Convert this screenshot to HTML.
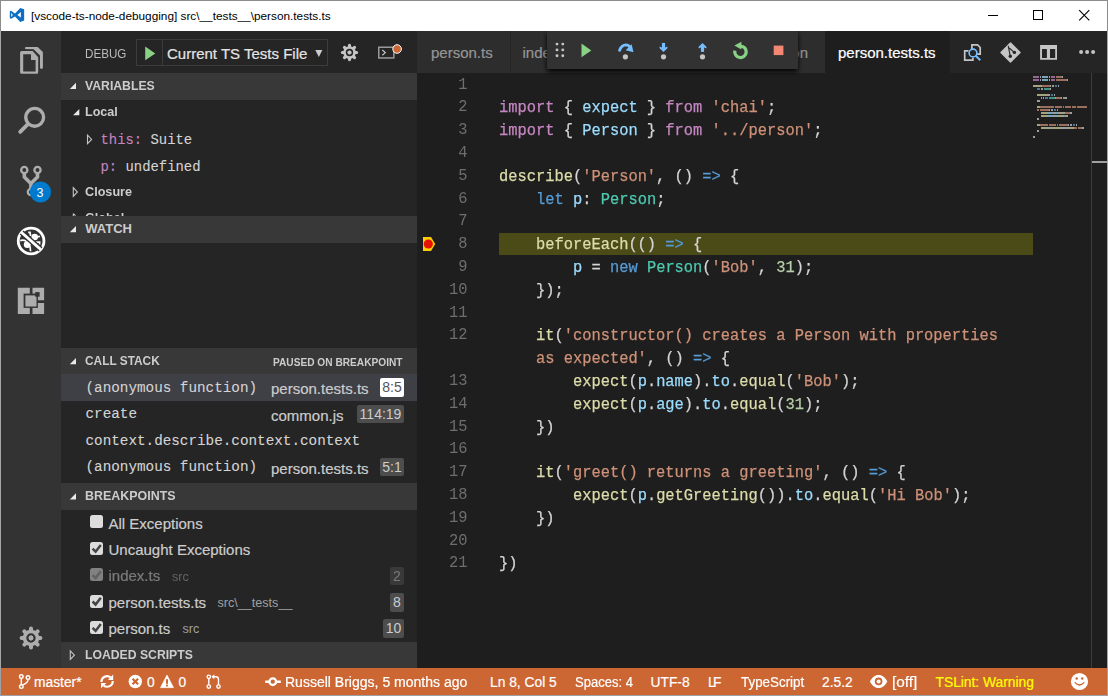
<!DOCTYPE html>
<html><head><meta charset="utf-8">
<style>
*{box-sizing:border-box}
html,body{margin:0;padding:0}
body{width:1108px;height:696px;overflow:hidden;position:relative;background:#9ba1a6;font-family:"Liberation Sans",sans-serif}
.a{position:absolute}
.t{position:absolute;white-space:pre;line-height:1;transform-origin:0 50%}
#titlebar{left:1px;top:1px;width:1106px;height:30px;background:#fff}
#topb{left:0;top:0;width:1108px;height:1px;background:#8c8c8c}
#leftb{left:0;top:0;width:1px;height:696px;background:#a6a6a6}
#activity{left:1px;top:31px;width:60px;height:637px;background:#333333}
#sidebar{left:61px;top:31px;width:356px;height:637px;background:#252526;overflow:hidden}
#tabs{left:417px;top:31px;width:690px;height:42px;background:#252526}
#editor{left:417px;top:73px;width:690px;height:595px;background:#1e1e1e;overflow:hidden}
#status{left:1px;top:668px;width:1106px;height:27px;background:#cc6633}
.hdr{position:absolute;left:0;width:356px;height:26.5px;background:#383838}
.hdrt{position:absolute;left:24.3px;top:0.3px;line-height:26.4px;font-size:13px;font-weight:bold;color:#cccccc;white-space:pre;transform-origin:0 50%}
.cl{position:absolute;left:82px;height:22.8px;line-height:22.8px;font-family:"Liberation Mono",monospace;font-size:16px;white-space:pre;padding-top:1.5px;transform:scaleX(0.9625);transform-origin:0 0;-webkit-text-stroke-width:0.25px}
.ln{position:absolute;left:0;width:50.5px;text-align:right;height:22.8px;line-height:22.8px;font-family:"Liberation Mono",monospace;font-size:16px;color:#6e6e6e;white-space:pre;padding-top:0.6px;transform:scaleX(0.9625);transform-origin:100% 0}
.row{position:absolute;left:0;width:356px;height:26.4px}
.rt{position:absolute;top:2px;line-height:26.4px;white-space:pre;transform-origin:0 50%}
.mono{font-family:"Liberation Mono",monospace;font-size:13.9px;color:#d4d4d4;-webkit-text-stroke-width:0.1px}
.ui{font-size:15px;color:#cccccc;-webkit-text-stroke-width:0.2px}
.bold{font-size:13px;font-weight:bold;color:#cccccc;top:0.4px}
.desc{font-size:12.6px;color:#a0a0a0;top:1.3px}
.badge{position:absolute;height:18.5px;line-height:19.5px;font-size:14px;text-align:center;background:#4d4d4d;color:#cccccc;border-radius:2px;white-space:pre}
.badge.sel{background:#ffffff;color:#555555}
.cb{position:absolute;width:13px;height:13px;background:#dcdcdc;border-radius:2.5px;top:6px;left:29px}
.sb{position:absolute;top:1px;line-height:27px;font-size:13.8px;color:#fff;white-space:pre;transform-origin:0 50%;-webkit-text-stroke-width:0.2px}
.tab{position:absolute;top:0;height:42px;background:#2d2d2d}
.tabt{position:absolute;top:1.2px;line-height:42px;font-size:15px;color:#969696;white-space:pre;-webkit-text-stroke-width:0.2px}
</style></head><body>
<div class="a" id="topb"></div>
<div class="a" id="leftb"></div>
<div class="a" id="titlebar">
  <div class="t" style="left:30px;top:10.3px;font-size:11.8px;color:#000;transform:scaleX(1.0)">[vscode-ts-node-debugging] src\__tests__\person.tests.ts</div>
</div>
<div class="a" id="activity"></div>
<div class="a" id="sidebar">
  <!-- debug header -->
  <div class="t" style="left:24px;top:16.5px;font-size:12.2px;color:#bbbbbb;transform:scaleX(0.955)">DEBUG</div>
  <div class="a" style="left:75px;top:8px;width:192px;height:26.5px;border:1px solid #3c3c3c"></div>
  <div class="a" style="left:101px;top:9px;width:1px;height:24.5px;background:#3c3c3c"></div>
  <div class="t ui" style="left:106px;top:15px;color:#e4e4e4">Current TS Tests File</div>

  <!-- VARIABLES -->
  <div class="hdr" style="top:42px"><div class="hdrt" style="transform:scaleX(0.94)">VARIABLES</div></div>
  <div class="row" style="top:68.5px"><div class="rt bold" style="left:24.3px;top:-0.2px;font-size:13.6px;transform:scaleX(0.925)">Local</div></div>
  <div class="row" style="top:94.9px"><div class="rt mono" style="left:39.5px;top:1.3px"><span style="color:#c586c0">this:</span> Suite</div></div>
  <div class="row" style="top:121.3px"><div class="rt mono" style="left:39.5px;top:1.3px"><span style="color:#c586c0">p:</span> undefined</div></div>
  <div class="row" style="top:147.7px"><div class="rt bold" style="left:24.3px;font-size:13.6px;transform:scaleX(0.93)">Closure</div></div>
  <div class="row" style="top:174.1px;height:10.9px;overflow:hidden"><div class="rt bold" style="left:24.3px;font-size:13.6px;transform:scaleX(0.93)">Global</div></div>

  <!-- WATCH -->
  <div class="hdr" style="top:185px"><div class="hdrt">WATCH</div></div>

  <!-- CALL STACK -->
  <div class="hdr" style="top:317px"><div class="hdrt" style="transform:scaleX(0.913)">CALL STACK</div>
    <div class="t" style="left:211.6px;top:9px;font-size:10.6px;font-weight:bold;color:#cccccc;transform:scaleX(0.958)">PAUSED ON BREAKPOINT</div></div>
  <div class="row" style="top:343.3px;background:#3f3f46">
    <div class="rt mono" style="left:24.5px;top:0.8px;font-size:14.3px">(anonymous function)</div>
    <div class="rt ui" style="left:210px">person.tests.ts</div>
    <div class="badge sel" style="left:319px;top:4.1px;width:24px">8:5</div>
  </div>
  <div class="row" style="top:369.7px">
    <div class="rt mono" style="left:24.5px;top:0.8px;font-size:14.3px">create</div>
    <div class="rt ui" style="left:210px">common.js</div>
    <div class="badge" style="left:296px;top:4.1px;width:47px">114:19</div>
  </div>
  <div class="row" style="top:396.1px">
    <div class="rt mono" style="left:24.5px;top:0.8px;font-size:14.3px">context.describe.context.context</div>
  </div>
  <div class="row" style="top:422.5px">
    <div class="rt mono" style="left:24.5px;top:0.8px;font-size:14.3px">(anonymous function)</div>
    <div class="rt ui" style="left:210px">person.tests.ts</div>
    <div class="badge" style="left:319px;top:4.1px;width:24px">5:1</div>
  </div>

  <!-- BREAKPOINTS -->
  <div class="hdr" style="top:452px"><div class="hdrt" style="transform:scaleX(0.957)">BREAKPOINTS</div></div>
  <div class="row" style="top:478.5px">
    <div class="cb" style="top:5.7px"></div>
    <div class="rt ui" style="left:47.5px;top:1px">All Exceptions</div>
  </div>
  <div class="row" style="top:504.9px">
    <div class="cb"></div>
    <div class="rt ui" style="left:47.5px;top:1px">Uncaught Exceptions</div>
  </div>
  <div class="row" style="top:531.3px;opacity:0.5">
    <div class="cb"></div>
    <div class="rt ui" style="left:47.5px;top:1px">index.ts</div>
    <div class="rt desc" style="left:111px">src</div>
    <div class="badge" style="left:329px;top:4.4px;width:14px">2</div>
  </div>
  <div class="row" style="top:557.7px">
    <div class="cb"></div>
    <div class="rt ui" style="left:47.5px;top:1px">person.tests.ts</div>
    <div class="rt desc" style="left:156.5px">src\__tests__</div>
    <div class="badge" style="left:329px;top:4.4px;width:14px">8</div>
  </div>
  <div class="row" style="top:584.1px">
    <div class="cb"></div>
    <div class="rt ui" style="left:47.5px;top:1px">person.ts</div>
    <div class="rt desc" style="left:121.5px">src</div>
    <div class="badge" style="left:322px;top:4.4px;width:21px">10</div>
  </div>
  <div class="hdr" style="top:610.5px"><div class="hdrt" style="transform:scaleX(0.939)">LOADED SCRIPTS</div></div>
</div>
<div class="a" id="tabs">
  <div class="tab" style="left:0;width:93px"><div class="tabt" style="left:14px">person.ts</div></div>
  <div class="tab" style="left:94px;width:104px"><div class="tabt" style="left:11.5px">index.ts</div></div>
  <div class="tab" style="left:199px;width:209px"><div class="tabt" style="right:17px">launch.json</div></div>
  <div class="tab" style="left:408px;width:125px;background:#1e1e1e"><div class="tabt" style="left:13px;color:#ffffff">person.tests.ts</div></div>
</div>
<div class="a" id="editor">
<div class="a" style="left:82px;top:159.6px;width:533.7px;height:22.8px;background:#4b4b18"></div>
<div class="ln" style="top:0.00px">1</div>
<div class="ln" style="top:22.80px">2</div>
<div class="ln" style="top:45.60px">3</div>
<div class="ln" style="top:68.40px">4</div>
<div class="ln" style="top:91.20px">5</div>
<div class="ln" style="top:114.00px">6</div>
<div class="ln" style="top:136.80px">7</div>
<div class="ln" style="top:159.60px">8</div>
<div class="ln" style="top:182.40px">9</div>
<div class="ln" style="top:205.20px">10</div>
<div class="ln" style="top:228.00px">11</div>
<div class="ln" style="top:250.80px">12</div>
<div class="ln" style="top:296.40px">13</div>
<div class="ln" style="top:319.20px">14</div>
<div class="ln" style="top:342.00px">15</div>
<div class="ln" style="top:364.80px">16</div>
<div class="ln" style="top:387.60px">17</div>
<div class="ln" style="top:410.40px">18</div>
<div class="ln" style="top:433.20px">19</div>
<div class="ln" style="top:456.00px">20</div>
<div class="ln" style="top:478.80px">21</div>
<div class="cl" style="top:0.00px"></div>
<div class="cl" style="top:22.80px"><span style="color:#c586c0">import</span><span style="color:#d4d4d4"> { </span><span style="color:#9cdcfe">expect</span><span style="color:#d4d4d4"> } </span><span style="color:#c586c0">from</span><span style="color:#d4d4d4"> </span><span style="color:#ce9178">'chai'</span><span style="color:#d4d4d4">;</span></div>
<div class="cl" style="top:45.60px"><span style="color:#c586c0">import</span><span style="color:#d4d4d4"> { </span><span style="color:#9cdcfe">Person</span><span style="color:#d4d4d4"> } </span><span style="color:#c586c0">from</span><span style="color:#d4d4d4"> </span><span style="color:#ce9178">'../person'</span><span style="color:#d4d4d4">;</span></div>
<div class="cl" style="top:68.40px"></div>
<div class="cl" style="top:91.20px"><span style="color:#dcdcaa">describe</span><span style="color:#d4d4d4">(</span><span style="color:#ce9178">'Person'</span><span style="color:#d4d4d4">, () </span><span style="color:#569cd6">=&gt;</span><span style="color:#d4d4d4"> {</span></div>
<div class="cl" style="top:114.00px"><span style="color:#d4d4d4">    </span><span style="color:#569cd6">let</span><span style="color:#d4d4d4"> </span><span style="color:#9cdcfe">p</span><span style="color:#d4d4d4">: </span><span style="color:#4ec9b0">Person</span><span style="color:#d4d4d4">;</span></div>
<div class="cl" style="top:136.80px"></div>
<div class="cl" style="top:159.60px"><span style="color:#d4d4d4">    </span><span style="color:#dcdcaa">beforeEach</span><span style="color:#d4d4d4">(() </span><span style="color:#569cd6">=&gt;</span><span style="color:#d4d4d4"> {</span></div>
<div class="cl" style="top:182.40px"><span style="color:#d4d4d4">        </span><span style="color:#9cdcfe">p</span><span style="color:#d4d4d4"> = </span><span style="color:#569cd6">new</span><span style="color:#d4d4d4"> </span><span style="color:#4ec9b0">Person</span><span style="color:#d4d4d4">(</span><span style="color:#ce9178">'Bob'</span><span style="color:#d4d4d4">, </span><span style="color:#b5cea8">31</span><span style="color:#d4d4d4">);</span></div>
<div class="cl" style="top:205.20px"><span style="color:#d4d4d4">    });</span></div>
<div class="cl" style="top:228.00px"></div>
<div class="cl" style="top:250.80px"><span style="color:#d4d4d4">    </span><span style="color:#dcdcaa">it</span><span style="color:#d4d4d4">(</span><span style="color:#ce9178">'constructor() creates a Person with properties</span></div>
<div class="cl" style="top:273.60px"><span style="color:#d4d4d4">    </span><span style="color:#ce9178">as expected'</span><span style="color:#d4d4d4">, () </span><span style="color:#569cd6">=&gt;</span><span style="color:#d4d4d4"> {</span></div>
<div class="cl" style="top:296.40px"><span style="color:#d4d4d4">        </span><span style="color:#dcdcaa">expect</span><span style="color:#d4d4d4">(</span><span style="color:#9cdcfe">p</span><span style="color:#d4d4d4">.</span><span style="color:#9cdcfe">name</span><span style="color:#d4d4d4">).</span><span style="color:#9cdcfe">to</span><span style="color:#d4d4d4">.</span><span style="color:#dcdcaa">equal</span><span style="color:#d4d4d4">(</span><span style="color:#ce9178">'Bob'</span><span style="color:#d4d4d4">);</span></div>
<div class="cl" style="top:319.20px"><span style="color:#d4d4d4">        </span><span style="color:#dcdcaa">expect</span><span style="color:#d4d4d4">(</span><span style="color:#9cdcfe">p</span><span style="color:#d4d4d4">.</span><span style="color:#9cdcfe">age</span><span style="color:#d4d4d4">).</span><span style="color:#9cdcfe">to</span><span style="color:#d4d4d4">.</span><span style="color:#dcdcaa">equal</span><span style="color:#d4d4d4">(</span><span style="color:#b5cea8">31</span><span style="color:#d4d4d4">);</span></div>
<div class="cl" style="top:342.00px"><span style="color:#d4d4d4">    })</span></div>
<div class="cl" style="top:364.80px"></div>
<div class="cl" style="top:387.60px"><span style="color:#d4d4d4">    </span><span style="color:#dcdcaa">it</span><span style="color:#d4d4d4">(</span><span style="color:#ce9178">'greet() returns a greeting'</span><span style="color:#d4d4d4">, () </span><span style="color:#569cd6">=&gt;</span><span style="color:#d4d4d4"> {</span></div>
<div class="cl" style="top:410.40px"><span style="color:#d4d4d4">        </span><span style="color:#dcdcaa">expect</span><span style="color:#d4d4d4">(</span><span style="color:#9cdcfe">p</span><span style="color:#d4d4d4">.</span><span style="color:#dcdcaa">getGreeting</span><span style="color:#d4d4d4">()).</span><span style="color:#9cdcfe">to</span><span style="color:#d4d4d4">.</span><span style="color:#dcdcaa">equal</span><span style="color:#d4d4d4">(</span><span style="color:#ce9178">'Hi Bob'</span><span style="color:#d4d4d4">);</span></div>
<div class="cl" style="top:433.20px"><span style="color:#d4d4d4">    })</span></div>
<div class="cl" style="top:456.00px"></div>
<div class="cl" style="top:478.80px"><span style="color:#d4d4d4">})</span></div>
</div>
<div class="a" id="status">
  <div class="sb" style="left:33px">master*</div>
  <div class="sb" style="left:146px">0</div>
  <div class="sb" style="left:177.5px">0</div>
  <div class="sb" style="left:283.5px;transform:scaleX(1.016)">Russell Briggs, 5 months ago</div>
  <div class="sb" style="left:489px">Ln 8, Col 5</div>
  <div class="sb" style="left:573.5px;transform:scaleX(0.944)">Spaces: 4</div>
  <div class="sb" style="left:649.5px">UTF-8</div>
  <div class="sb" style="left:707px;letter-spacing:-2.6px">LF</div>
  <div class="sb" style="left:739.5px;transform:scaleX(0.97)">TypeScript</div>
  <div class="sb" style="left:821px">2.5.2</div>
  <div class="sb" style="left:890.5px;transform:scaleX(1.11)">[off]</div>
  <div class="sb" style="left:934.5px;color:#ffff00">TSLint: Warning</div>
</div>
<div class="a" style="left:1107px;top:0;width:1px;height:31px;background:#8c8c8c"></div>
<div class="a" style="left:1107px;top:31px;width:1px;height:637px;background:#a6a6a6"></div>
<div class="a" style="left:1107px;top:668px;width:1px;height:28px;background:#9ba1a6"></div>
<div class="a" style="left:0;top:0;width:1px;height:31px;background:#8c8c8c"></div>
<div class="a" style="left:0;top:668px;width:1px;height:28px;background:#9ba1a6"></div>
<svg class="a" style="left:0;top:0" width="1108" height="696" viewBox="0 0 1108 696">
<path fill="#0e6fc2" fill-rule="evenodd" d="M9.79,11.27 L11.06,10.64 L15.01,13.48 L20.22,7.95 L24.17,9.21 L24.17,20.43 L20.22,22.01 L15.01,16.48 L11.06,18.85 L9.79,18.22 Z M11.21,12.69 L12.8,14.9 L11.21,16.96 Z M20.85,12.06 L17.38,14.9 L20.85,17.59 Z"/>
<rect x="988" y="15" width="10" height="1" fill="#000"/>
<rect x="1033.5" y="10.5" width="9" height="9" fill="none" stroke="#000" stroke-width="1"/>
<path d="M1079.2,10.2 L1089.3,20.3 M1089.3,10.2 L1079.2,20.3" stroke="#000" stroke-width="1.1"/>
<path fill="#adadad" d="M26,46.9 H37.7 L42.9,52.1 V67.6 Q42.9,68.9 41.5,68.9 Q40,68.9 40,67.6 V55.4 L33.6,49.2 H26 Q25,49.2 25,48 Q25,46.9 26,46.9 Z"/>
<path d="M19,49.6 H32.6 L39.6,56.6 V75.1 H19 Z" fill="#333"/>
<path fill="#adadad" fill-rule="evenodd" d="M21.6,51 H32.6 L38.2,57.2 V72.3 Q38.2,73.8 36.7,73.8 H21.6 Q20.1,73.8 20.1,72.3 V52.5 Q20.1,51 21.6,51 Z M23.2,54.2 V71.5 H35.6 V60.1 H31 V54.2 Z"/>
<circle cx="34.7" cy="117.3" r="8.9" fill="none" stroke="#adadad" stroke-width="3.4"/>
<path d="M27.4,124.6 L20.2,131.8" stroke="#adadad" stroke-width="3.8" stroke-linecap="round"/>
<circle cx="24.3" cy="170" r="3.1" fill="none" stroke="#adadad" stroke-width="2.3"/>
<circle cx="37.5" cy="170" r="3.1" fill="none" stroke="#adadad" stroke-width="2.3"/>
<circle cx="30.9" cy="192" r="3.1" fill="none" stroke="#adadad" stroke-width="2.3"/>
<path d="M24.3,173.5 V177 L30.9,183.5 V188.5 M37.5,173.5 V177 L30.9,183.5" fill="none" stroke="#adadad" stroke-width="3.6" stroke-linejoin="round"/>
<circle cx="40.5" cy="192" r="10.6" fill="#007acc"/>
<circle cx="31.1" cy="241" r="12.85" fill="none" stroke="#fff" stroke-width="2.8"/>
<g fill="#fff"><circle cx="27.3" cy="244.5" r="3.5"/><circle cx="34.7" cy="237.1" r="3.3"/></g>
<g fill="none" stroke="#fff" stroke-width="1.7"><path d="M20.2,240.6 Q23.5,239.6 26.4,241.2"/><path d="M30.1,246.4 L30.5,251.3"/><path d="M28.2,232.3 H30 L30.6,236"/><path d="M36.8,237 L39.9,236.4"/><path d="M36.2,242.2 H39.6 V244.6"/></g>
<path d="M21.6,232.5 L40.6,249.3" stroke="#333" stroke-width="5.6"/>
<path d="M21.3,232.2 L40.9,249.6" stroke="#fff" stroke-width="2.8"/>
<path fill="#adadad" d="M17.8,287.8 H29.8 V314.1 H17.8 Z M32.5,287.8 H44.1 V300.3 H32.5 Z M32.5,303 H44.1 V314.1 H32.5 Z"/>
<rect x="23.6" y="293.6" width="14.3" height="14.3" fill="#333"/>
<rect x="25.4" y="295.4" width="11.1" height="11.1" fill="#adadad"/>
<rect x="35.2" y="292.1" width="4.4" height="4.6" fill="#333"/>
<path d="M31.00,630.70 L31.00,628.60 M36.16,632.84 L37.65,631.35 M38.30,638.00 L40.40,638.00 M36.16,643.16 L37.65,644.65 M31.00,645.30 L31.00,647.40 M25.84,643.16 L24.35,644.65 M23.70,638.00 L21.60,638.00 M25.84,632.84 L24.35,631.35 " stroke="#adadad" stroke-width="4.0" stroke-linecap="round"/><circle cx="31" cy="638" r="8.3" fill="#adadad"/><circle cx="31" cy="638" r="3.55" fill="none" stroke="#333" stroke-width="2.3"/><circle cx="31" cy="638" r="2.4" fill="#adadad"/>
<path d="M145.2,46.6 L155.3,53.45 L145.2,60.3 Z" fill="#89d185"/>
<path d="M315.3,50 L322.4,50 L318.85,56.9 Z" fill="#cccccc"/>
<path d="M349.50,47.20 L349.50,45.40 M353.25,48.75 L354.52,47.48 M354.80,52.50 L356.60,52.50 M353.25,56.25 L354.52,57.52 M349.50,57.80 L349.50,59.60 M345.75,56.25 L344.48,57.52 M344.20,52.50 L342.40,52.50 M345.75,48.75 L344.48,47.48 " stroke="#c5c5c5" stroke-width="3.2" stroke-linecap="round"/><circle cx="349.5" cy="52.5" r="6.3" fill="#c5c5c5"/><circle cx="349.5" cy="52.5" r="2.9" fill="none" stroke="#252526" stroke-width="1.6"/><circle cx="349.5" cy="52.5" r="1.8" fill="#c5c5c5"/>
<rect x="378.75" y="47.25" width="15.1" height="10.7" fill="none" stroke="#9a9a9a" stroke-width="1.5"/>
<path d="M382.3,50 L385.3,52.6 L382.3,55.2" fill="none" stroke="#c5c5c5" stroke-width="1.2"/>
<circle cx="397.1" cy="49" r="4.3" fill="#cc6633" stroke="#fff" stroke-width="1"/>
<path d="M76.0,82.8 L76.0,89.0 L69.8,89.0 Z" fill="#e8e8e8"/>
<path d="M79.3,109.0 L79.3,115.2 L73.1,115.2 Z" fill="#e8e8e8"/>
<path d="M87.5,135.1 L91.6,139.4 L87.5,143.70000000000002 Z" fill="none" stroke="#c5c5c5" stroke-width="1.1"/>
<path d="M73.3,187.7 L77.39999999999999,192 L73.3,196.3 Z" fill="none" stroke="#c5c5c5" stroke-width="1.1"/>
<path d="M76.0,226.0 L76.0,232.2 L69.8,232.2 Z" fill="#e8e8e8"/>
<path d="M73.3,213.6 L75.5,215.6 M73.3,213.6 V216" stroke="#c5c5c5" stroke-width="1.1" fill="none"/>
<path d="M76.0,358.0 L76.0,364.2 L69.8,364.2 Z" fill="#e8e8e8"/>
<path d="M76.0,493.3 L76.0,499.5 L69.8,499.5 Z" fill="#e8e8e8"/>
<path d="M70.3,650.9000000000001 L74.39999999999999,655.2 L70.3,659.5 Z" fill="none" stroke="#c5c5c5" stroke-width="1.1"/>
<rect x="1033" y="76" width="6" height="2" fill="#c586c0" opacity="0.7"/>
<rect x="1040" y="76" width="1" height="2" fill="#d4d4d4" opacity="0.7"/>
<rect x="1042" y="76" width="6" height="2" fill="#9cdcfe" opacity="0.7"/>
<rect x="1049" y="76" width="1" height="2" fill="#d4d4d4" opacity="0.7"/>
<rect x="1051" y="76" width="4" height="2" fill="#c586c0" opacity="0.7"/>
<rect x="1056" y="76" width="6" height="2" fill="#ce9178" opacity="0.7"/>
<rect x="1062" y="76" width="1" height="2" fill="#d4d4d4" opacity="0.7"/>
<rect x="1033" y="79" width="6" height="2" fill="#c586c0" opacity="0.7"/>
<rect x="1040" y="79" width="1" height="2" fill="#d4d4d4" opacity="0.7"/>
<rect x="1042" y="79" width="6" height="2" fill="#9cdcfe" opacity="0.7"/>
<rect x="1049" y="79" width="1" height="2" fill="#d4d4d4" opacity="0.7"/>
<rect x="1051" y="79" width="4" height="2" fill="#c586c0" opacity="0.7"/>
<rect x="1056" y="79" width="11" height="2" fill="#ce9178" opacity="0.7"/>
<rect x="1067" y="79" width="1" height="2" fill="#d4d4d4" opacity="0.7"/>
<rect x="1033" y="85" width="8" height="2" fill="#dcdcaa" opacity="0.7"/>
<rect x="1041" y="85" width="1" height="2" fill="#d4d4d4" opacity="0.7"/>
<rect x="1042" y="85" width="8" height="2" fill="#ce9178" opacity="0.7"/>
<rect x="1050" y="85" width="1" height="2" fill="#d4d4d4" opacity="0.7"/>
<rect x="1052" y="85" width="2" height="2" fill="#d4d4d4" opacity="0.7"/>
<rect x="1055" y="85" width="2" height="2" fill="#569cd6" opacity="0.7"/>
<rect x="1058" y="85" width="1" height="2" fill="#d4d4d4" opacity="0.7"/>
<rect x="1037" y="88" width="3" height="2" fill="#569cd6" opacity="0.7"/>
<rect x="1041" y="88" width="1" height="2" fill="#9cdcfe" opacity="0.7"/>
<rect x="1042" y="88" width="1" height="2" fill="#d4d4d4" opacity="0.7"/>
<rect x="1044" y="88" width="6" height="2" fill="#4ec9b0" opacity="0.7"/>
<rect x="1050" y="88" width="1" height="2" fill="#d4d4d4" opacity="0.7"/>
<rect x="1037" y="94" width="10" height="2" fill="#dcdcaa" opacity="0.7"/>
<rect x="1047" y="94" width="3" height="2" fill="#d4d4d4" opacity="0.7"/>
<rect x="1051" y="94" width="2" height="2" fill="#569cd6" opacity="0.7"/>
<rect x="1054" y="94" width="1" height="2" fill="#d4d4d4" opacity="0.7"/>
<rect x="1041" y="97" width="1" height="2" fill="#9cdcfe" opacity="0.7"/>
<rect x="1043" y="97" width="1" height="2" fill="#d4d4d4" opacity="0.7"/>
<rect x="1045" y="97" width="3" height="2" fill="#569cd6" opacity="0.7"/>
<rect x="1049" y="97" width="6" height="2" fill="#4ec9b0" opacity="0.7"/>
<rect x="1055" y="97" width="1" height="2" fill="#d4d4d4" opacity="0.7"/>
<rect x="1056" y="97" width="5" height="2" fill="#ce9178" opacity="0.7"/>
<rect x="1061" y="97" width="1" height="2" fill="#d4d4d4" opacity="0.7"/>
<rect x="1063" y="97" width="2" height="2" fill="#b5cea8" opacity="0.7"/>
<rect x="1065" y="97" width="2" height="2" fill="#d4d4d4" opacity="0.7"/>
<rect x="1037" y="100" width="3" height="2" fill="#d4d4d4" opacity="0.7"/>
<rect x="1037" y="106" width="2" height="2" fill="#dcdcaa" opacity="0.7"/>
<rect x="1039" y="106" width="1" height="2" fill="#d4d4d4" opacity="0.7"/>
<rect x="1040" y="106" width="14" height="2" fill="#ce9178" opacity="0.7"/>
<rect x="1055" y="106" width="7" height="2" fill="#ce9178" opacity="0.7"/>
<rect x="1063" y="106" width="1" height="2" fill="#ce9178" opacity="0.7"/>
<rect x="1065" y="106" width="6" height="2" fill="#ce9178" opacity="0.7"/>
<rect x="1072" y="106" width="4" height="2" fill="#ce9178" opacity="0.7"/>
<rect x="1077" y="106" width="10" height="2" fill="#ce9178" opacity="0.7"/>
<rect x="1037" y="109" width="2" height="2" fill="#ce9178" opacity="0.7"/>
<rect x="1040" y="109" width="9" height="2" fill="#ce9178" opacity="0.7"/>
<rect x="1049" y="109" width="1" height="2" fill="#d4d4d4" opacity="0.7"/>
<rect x="1051" y="109" width="2" height="2" fill="#d4d4d4" opacity="0.7"/>
<rect x="1054" y="109" width="2" height="2" fill="#569cd6" opacity="0.7"/>
<rect x="1057" y="109" width="1" height="2" fill="#d4d4d4" opacity="0.7"/>
<rect x="1041" y="112" width="6" height="2" fill="#dcdcaa" opacity="0.7"/>
<rect x="1047" y="112" width="1" height="2" fill="#d4d4d4" opacity="0.7"/>
<rect x="1048" y="112" width="1" height="2" fill="#9cdcfe" opacity="0.7"/>
<rect x="1049" y="112" width="1" height="2" fill="#d4d4d4" opacity="0.7"/>
<rect x="1050" y="112" width="4" height="2" fill="#9cdcfe" opacity="0.7"/>
<rect x="1054" y="112" width="2" height="2" fill="#d4d4d4" opacity="0.7"/>
<rect x="1056" y="112" width="2" height="2" fill="#9cdcfe" opacity="0.7"/>
<rect x="1058" y="112" width="1" height="2" fill="#d4d4d4" opacity="0.7"/>
<rect x="1059" y="112" width="5" height="2" fill="#dcdcaa" opacity="0.7"/>
<rect x="1064" y="112" width="1" height="2" fill="#d4d4d4" opacity="0.7"/>
<rect x="1065" y="112" width="5" height="2" fill="#ce9178" opacity="0.7"/>
<rect x="1070" y="112" width="2" height="2" fill="#d4d4d4" opacity="0.7"/>
<rect x="1041" y="115" width="6" height="2" fill="#dcdcaa" opacity="0.7"/>
<rect x="1047" y="115" width="1" height="2" fill="#d4d4d4" opacity="0.7"/>
<rect x="1048" y="115" width="1" height="2" fill="#9cdcfe" opacity="0.7"/>
<rect x="1049" y="115" width="1" height="2" fill="#d4d4d4" opacity="0.7"/>
<rect x="1050" y="115" width="3" height="2" fill="#9cdcfe" opacity="0.7"/>
<rect x="1053" y="115" width="2" height="2" fill="#d4d4d4" opacity="0.7"/>
<rect x="1055" y="115" width="2" height="2" fill="#9cdcfe" opacity="0.7"/>
<rect x="1057" y="115" width="1" height="2" fill="#d4d4d4" opacity="0.7"/>
<rect x="1058" y="115" width="5" height="2" fill="#dcdcaa" opacity="0.7"/>
<rect x="1063" y="115" width="1" height="2" fill="#d4d4d4" opacity="0.7"/>
<rect x="1064" y="115" width="2" height="2" fill="#b5cea8" opacity="0.7"/>
<rect x="1066" y="115" width="2" height="2" fill="#d4d4d4" opacity="0.7"/>
<rect x="1037" y="118" width="2" height="2" fill="#d4d4d4" opacity="0.7"/>
<rect x="1037" y="124" width="2" height="2" fill="#dcdcaa" opacity="0.7"/>
<rect x="1039" y="124" width="1" height="2" fill="#d4d4d4" opacity="0.7"/>
<rect x="1040" y="124" width="8" height="2" fill="#ce9178" opacity="0.7"/>
<rect x="1049" y="124" width="7" height="2" fill="#ce9178" opacity="0.7"/>
<rect x="1057" y="124" width="1" height="2" fill="#ce9178" opacity="0.7"/>
<rect x="1059" y="124" width="9" height="2" fill="#ce9178" opacity="0.7"/>
<rect x="1068" y="124" width="1" height="2" fill="#d4d4d4" opacity="0.7"/>
<rect x="1070" y="124" width="2" height="2" fill="#d4d4d4" opacity="0.7"/>
<rect x="1073" y="124" width="2" height="2" fill="#569cd6" opacity="0.7"/>
<rect x="1076" y="124" width="1" height="2" fill="#d4d4d4" opacity="0.7"/>
<rect x="1041" y="127" width="6" height="2" fill="#dcdcaa" opacity="0.7"/>
<rect x="1047" y="127" width="1" height="2" fill="#d4d4d4" opacity="0.7"/>
<rect x="1048" y="127" width="1" height="2" fill="#9cdcfe" opacity="0.7"/>
<rect x="1049" y="127" width="1" height="2" fill="#d4d4d4" opacity="0.7"/>
<rect x="1050" y="127" width="11" height="2" fill="#dcdcaa" opacity="0.7"/>
<rect x="1061" y="127" width="4" height="2" fill="#d4d4d4" opacity="0.7"/>
<rect x="1065" y="127" width="2" height="2" fill="#9cdcfe" opacity="0.7"/>
<rect x="1067" y="127" width="1" height="2" fill="#d4d4d4" opacity="0.7"/>
<rect x="1068" y="127" width="5" height="2" fill="#dcdcaa" opacity="0.7"/>
<rect x="1073" y="127" width="1" height="2" fill="#d4d4d4" opacity="0.7"/>
<rect x="1074" y="127" width="3" height="2" fill="#ce9178" opacity="0.7"/>
<rect x="1078" y="127" width="4" height="2" fill="#ce9178" opacity="0.7"/>
<rect x="1082" y="127" width="2" height="2" fill="#d4d4d4" opacity="0.7"/>
<rect x="1037" y="130" width="2" height="2" fill="#d4d4d4" opacity="0.7"/>
<rect x="1033" y="136" width="2" height="2" fill="#d4d4d4" opacity="0.7"/>
<defs><filter id="sh" x="-10%" y="0" width="120%" height="160%"><feDropShadow dx="0" dy="2.5" stdDeviation="2.5" flood-color="#000" flood-opacity="1"/></filter></defs><rect x="547" y="31" width="251" height="38" fill="#333333" filter="url(#sh)"/>
<circle cx="557.0" cy="44.1" r="1.45" fill="#c5c5c5"/>
<circle cx="557.0" cy="49.9" r="1.45" fill="#c5c5c5"/>
<circle cx="557.0" cy="55.8" r="1.45" fill="#c5c5c5"/>
<circle cx="562.8" cy="44.1" r="1.45" fill="#c5c5c5"/>
<circle cx="562.8" cy="49.9" r="1.45" fill="#c5c5c5"/>
<circle cx="562.8" cy="55.8" r="1.45" fill="#c5c5c5"/>
<path d="M581.5,43.5 L591.3,50.4 L581.5,57.3 Z" fill="#89d185"/>
<path d="M619.6,50.3 Q621.5,45 626,44.9 Q629,45 630.3,47.6" fill="none" stroke="#75beff" stroke-width="2.9" stroke-linecap="round"/>
<path d="M631.6,44.3 L633.5,52.2 L625.6,50.2 Z" fill="#75beff"/>
<circle cx="625.4" cy="56.8" r="2.6" fill="#c5c5c5"/>
<path d="M663.5,42.9 V48.5" stroke="#75beff" stroke-width="3.2"/>
<path d="M659.6,46.4 L663.5,48.2 L667.4,46.4 L667.4,48.2 L663.5,52.1 L659.6,48.2 Z" fill="#75beff"/>
<circle cx="663.5" cy="56.8" r="2.6" fill="#c5c5c5"/>
<path d="M702.5,46.5 V51.9" stroke="#75beff" stroke-width="3.2"/>
<path d="M698.6,48.6 L702.5,46.8 L706.4,48.6 L706.4,46.8 L702.5,42.9 L698.6,46.8 Z" fill="#75beff"/>
<circle cx="702.5" cy="56.8" r="2.6" fill="#c5c5c5"/>
<path d="M740.6,46.05 A5.75,5.75 0 1 1 734.85,50.6" fill="none" stroke="#89d185" stroke-width="3.3"/>
<path d="M734.4,45.6 L741.4,41.7 L741.4,49.5 Z" fill="#89d185"/>
<rect x="773.7" y="45.6" width="9.7" height="9.5" fill="#f48771"/>
<path d="M971.9,53 V44.9 H977.6 L980.2,47.5 V54.2 H977" fill="none" stroke="#c5c5c5" stroke-width="1.7"/>
<path d="M968.5,50.8 H964.7 V60.2 H972.9 V58" fill="none" stroke="#c5c5c5" stroke-width="1.7"/>
<circle cx="973" cy="53" r="3.9" fill="#252526" stroke="#75beff" stroke-width="1.6"/>
<path d="M975.9,56 L980.3,60.2" stroke="#75beff" stroke-width="2"/>
<path d="M1010.5,42.9 L1020,52.4 L1010.5,61.9 L1001,52.4 Z" fill="#c5c5c5" stroke="#c5c5c5" stroke-width="1.4" stroke-linejoin="round"/>
<path d="M1008.2,45.8 L1010.3,56.3 M1009.2,48 L1014.2,52.4" stroke="#252526" stroke-width="1.1"/>
<circle cx="1010.3" cy="56.3" r="1.7" fill="#252526"/><circle cx="1014.4" cy="52.4" r="1.7" fill="#252526"/>
<path fill="#c5c5c5" fill-rule="evenodd" d="M1040.1,45.1 H1057 V59.8 H1040.1 Z M1042,49 V58 H1046.9 V49 Z M1050,49 V58 H1055.2 V49 Z"/>
<circle cx="1081.1" cy="52" r="2" fill="#c5c5c5"/>
<circle cx="1087.1" cy="52" r="2" fill="#c5c5c5"/>
<circle cx="1093.1" cy="52" r="2" fill="#c5c5c5"/>
<path d="M423,237 H431 L435.2,244 L431,251 H423 Z" fill="#ffcc00"/>
<circle cx="428.3" cy="244" r="4.6" fill="#e51400"/>
<rect x="1091" y="73" width="1" height="595" fill="#3c3c3c"/>
<rect x="1092" y="161" width="15" height="2" fill="#a0a0a0"/>
<path d="M92.6,548.7 L95.6,551.7 L100.8,544.9" fill="none" stroke="#444" stroke-width="2.5" opacity="1"/>
<path d="M92.6,575.1 L95.6,578.1 L100.8,571.3" fill="none" stroke="#444" stroke-width="2.5" opacity="0.5"/>
<path d="M92.6,601.5 L95.6,604.5 L100.8,597.7" fill="none" stroke="#444" stroke-width="2.5" opacity="1"/>
<path d="M92.6,627.9 L95.6,630.9 L100.8,624.1" fill="none" stroke="#444" stroke-width="2.5" opacity="1"/>
<g fill="none" stroke="#fff" stroke-width="1.4"><circle cx="21.3" cy="676.6" r="1.8"/><circle cx="21.3" cy="686.6" r="1.8"/><circle cx="28" cy="677.6" r="1.8"/><path d="M21.3,678.5 V684.8 M28,679.4 Q28,683 22.5,684.8"/></g>
<path d="M101.4,682 A5.7,5.7 0 0 1 110.6,677.4" fill="none" stroke="#fff" stroke-width="2.1"/>
<path d="M113.2,674.6 V679.9 H107.9 Z" fill="#fff"/>
<path d="M112.8,680.9 A5.7,5.7 0 0 1 103.6,685.5" fill="none" stroke="#fff" stroke-width="2.1"/>
<path d="M101,688.2 V682.9 H106.3 Z" fill="#fff"/>
<circle cx="135.3" cy="681.5" r="6.7" fill="#fff"/>
<path d="M132.5,678.7 L138.1,684.3 M138.1,678.7 L132.5,684.3" stroke="#cc6633" stroke-width="2.1"/>
<path d="M167,675.2 L173.4,687.6 H160.6 Z" fill="#fff" stroke="#fff" stroke-width="0.8" stroke-linejoin="round"/>
<rect x="166" y="679.2" width="2" height="4.6" fill="#cc6633"/><rect x="166" y="684.6" width="2" height="1.8" fill="#cc6633"/>
<g fill="none" stroke="#fff" stroke-width="1.4"><circle cx="208.8" cy="676.8" r="1.7"/><circle cx="208.8" cy="686.6" r="1.7"/><circle cx="218.5" cy="686.6" r="1.7"/><path d="M208.8,678.6 V684.8 M218.5,684.8 V679.5 Q218.5,676.8 215.8,676.8 H213"/></g>
<path d="M214.3,674.3 L211.3,676.8 L214.3,679.3 Z" fill="#fff"/>
<circle cx="272.8" cy="681.7" r="3.3" fill="none" stroke="#fff" stroke-width="2.3"/>
<path d="M265.2,681.8 H269.5 M276.2,681.8 H280.8" stroke="#fff" stroke-width="2.6"/>
<path d="M869.9,681.4 C872.5,676.5 875.5,674.9 878.6,674.9 C881.7,674.9 884.7,676.5 887.3,681.4 C884.7,686.3 881.7,687.9 878.6,687.9 C875.5,687.9 872.5,686.3 869.9,681.4 Z" fill="#fff"/>
<circle cx="878.6" cy="681.4" r="3.8" fill="#cc6633"/><circle cx="878.6" cy="681.4" r="2" fill="#fff"/>
<circle cx="1079.5" cy="681.5" r="8.6" fill="#fff"/>
<circle cx="1076.7" cy="678.5" r="1.25" fill="#cc6633"/><circle cx="1082.3" cy="678.5" r="1.25" fill="#cc6633"/>
<path d="M1074.8,682.4 Q1079.5,687.6 1084.2,682.4" fill="none" stroke="#cc6633" stroke-width="1.4"/>
</svg>
<div class="t" style="left:36.6px;top:186.5px;font-size:12.5px;color:#fff">3</div>
</body></html>
